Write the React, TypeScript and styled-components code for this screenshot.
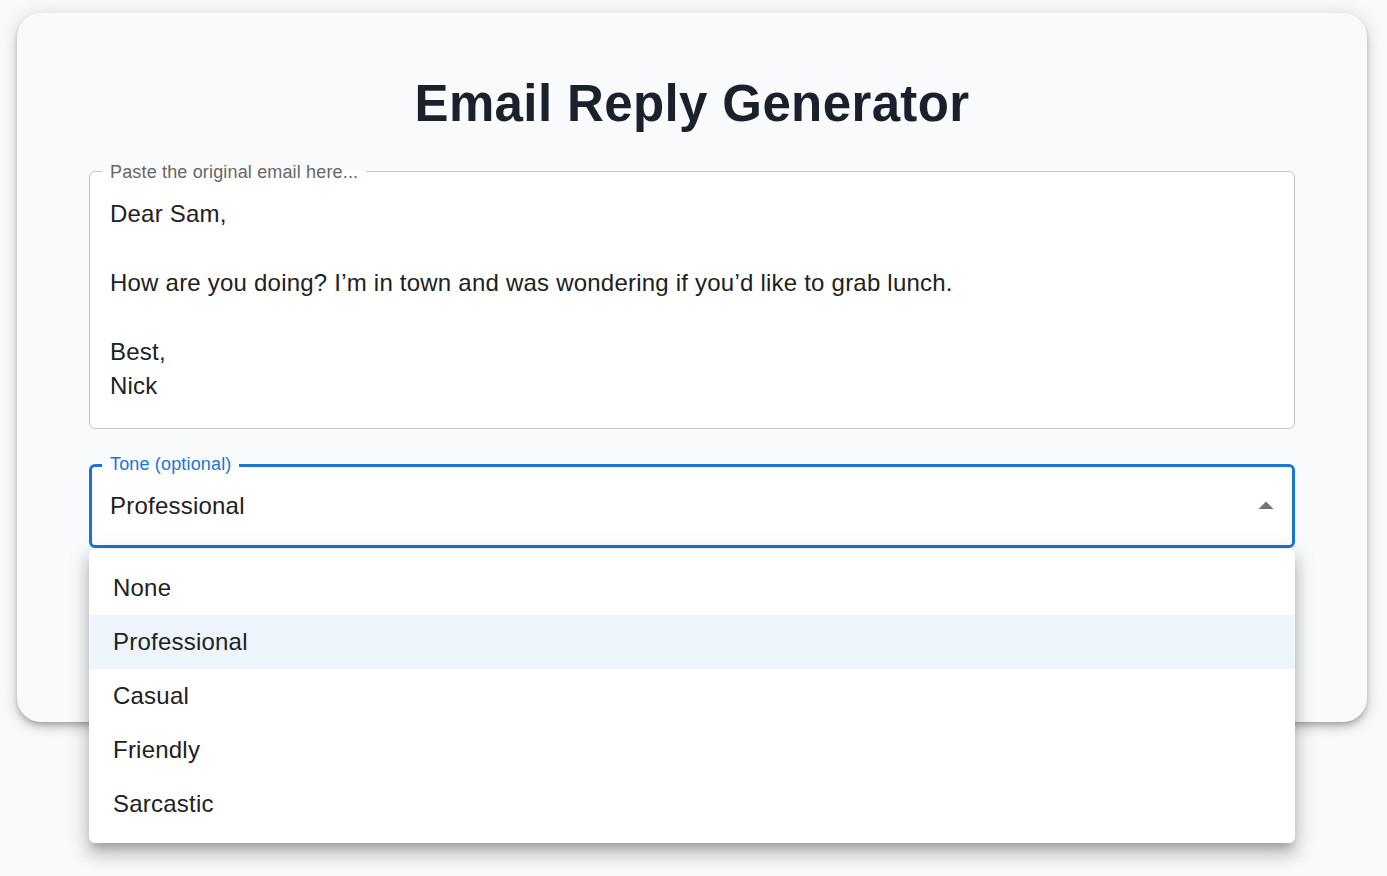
import React from 'react';
import styled, { createGlobalStyle } from 'styled-components';

const GlobalStyle = createGlobalStyle`
  html, body {
    margin: 0;
    padding: 0;
    background: #f8f9fa;
    font-family: "Liberation Sans", Arial, Helvetica, sans-serif;
  }
  * { box-sizing: border-box; }
`;

const tones = ['None', 'Professional', 'Casual', 'Friendly', 'Sarcastic'];

const emailText = `Dear Sam,

How are you doing? I’m in town and was wondering if you’d like to grab lunch.

Best,
Nick`;

const App: React.FC = () => {
  const selected = 'Professional';

  return (
    <Page>
      <GlobalStyle />
      <Card>
        <Title>Email Reply Generator</Title>

        <Field>
          <Legend>Paste the original email here...</Legend>
          <TextArea readOnly rows={6} value={emailText} />
        </Field>

        <SelectWrap>
          <Field focused>
            <Legend focused>Tone (optional)</Legend>
            <SelectValue>
              <span>{selected}</span>
              <ArrowIcon viewBox="0 0 24 24">
                <path d="m7 14 5-5 5 5z" fill="currentColor" />
              </ArrowIcon>
            </SelectValue>
          </Field>
          <Menu>
            {tones.map((tone) => (
              <MenuItem key={tone} selected={tone === selected}>
                {tone}
              </MenuItem>
            ))}
          </Menu>
        </SelectWrap>

        <GenerateButton>Generate Reply</GenerateButton>
      </Card>
    </Page>
  );
};

const Page = styled.div`
  min-height: 876px;
  padding: 13px 20px 0 17px;
  background: #f8f9fa;
`;

const Card = styled.div`
  display: flex;
  flex-direction: column;
  padding: 60px 72px 72px;
  background: #f9fafb;
  border-radius: 24px;
  box-shadow: 0 3px 5px -1px rgba(0, 0, 0, 0.2), 0 6px 10px 0 rgba(0, 0, 0, 0.14),
    0 1px 18px 0 rgba(0, 0, 0, 0.12);
`;

const Title = styled.h1`
  margin: 0 0 27px;
  font-size: 51px;
  line-height: 1.235;
  font-weight: 700;
  letter-spacing: 0.38px;
  text-align: center;
  color: #1a202c;
`;

const Field = styled.fieldset<{ focused?: boolean }>`
  margin: 0;
  padding: 0;
  min-inline-size: 0;
  background: #ffffff;
  border: ${({ focused }) => (focused ? '3px solid #1976d2' : '1px solid #c4c4c4')};
  border-radius: 6px;
`;

const Legend = styled.legend<{ focused?: boolean }>`
  margin-left: ${({ focused }) => (focused ? '10px' : '12px')};
  padding: 0 8px;
  font-size: 18px;
  line-height: 18px;
  letter-spacing: 0.16px;
  color: ${({ focused }) => (focused ? '#1976d2' : '#666666')};
  position: relative;
  top: ${({ focused }) => (focused ? '-2px' : '0')};
`;

const TextArea = styled.textarea`
  display: block;
  width: 100%;
  margin: 0;
  padding: 16px 20px 24px;
  border: none;
  outline: none;
  resize: none;
  background: transparent;
  font-family: "Liberation Sans", Arial, Helvetica, sans-serif;
  font-size: 24px;
  line-height: 34.5px;
  letter-spacing: 0.22px;
  color: #212121;
  overflow: hidden;
`;

const SelectWrap = styled.div`
  position: relative;
  margin-top: 28px;
`;

const SelectValue = styled.div`
  display: flex;
  align-items: center;
  justify-content: space-between;
  padding: 13px 8px 21px 18px;
  font-size: 24px;
  line-height: 34.5px;
  letter-spacing: 0.22px;
  color: #212121;
`;

const ArrowIcon = styled.svg`
  width: 36px;
  height: 36px;
  color: #757575;
`;

const Menu = styled.ul`
  position: absolute;
  top: calc(100% + 1px);
  left: 0;
  right: 0;
  z-index: 10;
  margin: 0;
  padding: 12px 0;
  list-style: none;
  background: #ffffff;
  border-radius: 6px;
  box-shadow: 0 7px 8px -4px rgba(0, 0, 0, 0.2), 0 12px 15px 2px rgba(0, 0, 0, 0.14),
    0 5px 21px 3px rgba(0, 0, 0, 0.12);
`;

const MenuItem = styled.li<{ selected?: boolean }>`
  display: flex;
  align-items: center;
  height: 54px;
  padding: 0 24px;
  font-size: 24px;
  letter-spacing: 0.22px;
  color: #212121;
  background: ${({ selected }) => (selected ? '#edf4fb' : 'transparent')};
`;

const GenerateButton = styled.button`
  margin-top: 36px;
  height: 66px;
  border: none;
  border-radius: 6px;
  background: #1976d2;
  color: #ffffff;
  font-family: "Liberation Sans", Arial, Helvetica, sans-serif;
  font-size: 22px;
  font-weight: 700;
  text-transform: uppercase;
`;

export default App;
